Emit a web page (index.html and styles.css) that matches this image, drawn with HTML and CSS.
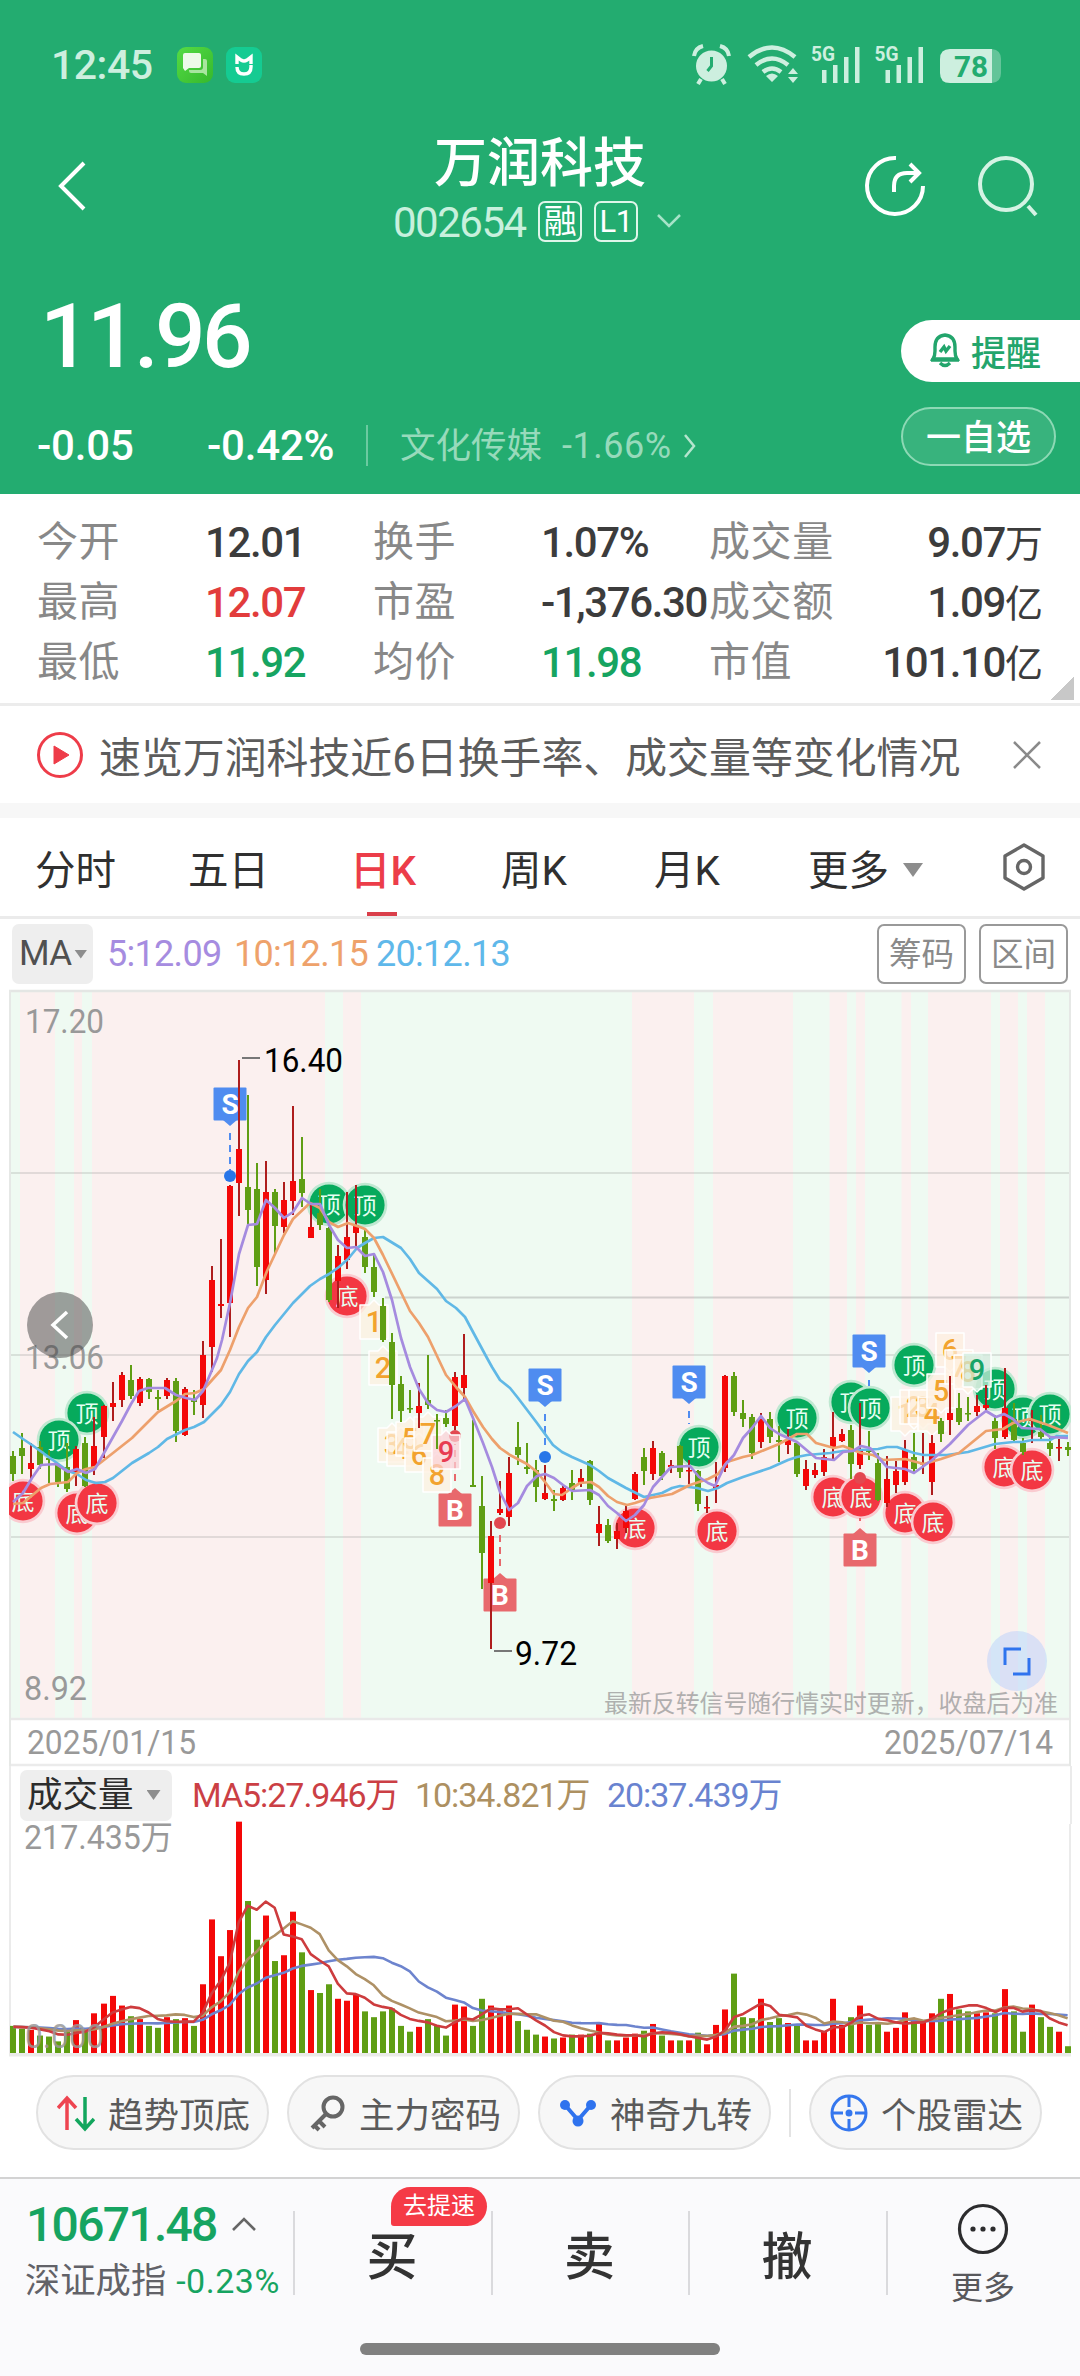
FILE: index.html
```html
<!DOCTYPE html>
<html lang="zh-CN">
<head>
<meta charset="utf-8">
<title>万润科技 002654</title>
<link rel="stylesheet" href="styles.css">
</head>
<body>
<header class="head">
  <div class="status">
    <span class="clock">12:45</span>
    <svg class="app" width="36" height="36" viewBox="0 0 36 36"><defs><linearGradient id="ga" x2="1" y2="1"><stop stop-color="#55db45"/><stop offset="1" stop-color="#36b82c"/></linearGradient></defs><rect width="36" height="36" rx="9" fill="url(#ga)"/><path d="M8 6h14a2 2 0 0 1 2 2v11a2 2 0 0 1-2 2H12l-4 3-2-3V8a2 2 0 0 1 2-2z" fill="#edfae9"/><path d="M26 12h2a2 2 0 0 1 2 2v15l-4-3H14a2 2 0 0 1-2-2v-1h11a3 3 0 0 0 3-3z" fill="#a9e59f"/></svg>
    <svg class="app" width="36" height="36" viewBox="0 0 36 36"><rect width="36" height="36" rx="9" fill="#15cb92"/><path d="M11 17V10l4 3q3 2 6 0l4-3v7M11 20q0 7 7 7t7-7v-2" fill="none" stroke="#fff" stroke-width="3.4"/></svg>
    <span class="grow"></span>
    <svg class="sys" width="310" height="44" viewBox="690 42 310 44" fill="#cdefdf">
      <circle cx="710.500" cy="65" r="15.500"/><path d="M693 55q1-8 9-10M728 55q-1-8-9-10M700 78l-3 5M721 78l3 5" fill="none" stroke="#cdefdf" stroke-width="4"/><path d="M710.500 56v9l-4 5" fill="none" stroke="#23ac70" stroke-width="3"/>
      <g fill="none" stroke="#cdefdf" stroke-width="4.500"><path d="M748 56q23-19 46 0M755 64q16-13 32 0M762 71q9-7 18 0"/></g><path d="M771 81l-6-6q6-5 12 0zM787 73l5-6 5 6zM787 76h10l-5 6z"/>
      <g id="bars"><rect x="821" y="69" width="4.500" height="13"/><rect x="832" y="64" width="4.500" height="18"/><rect x="843" y="56" width="4.500" height="26"/><rect x="854" y="46" width="4.500" height="36"/><text x="810" y="60" font-size="20" font-weight="700" textLength="24" lengthAdjust="spacingAndGlyphs">5G</text></g>
      <use href="#bars" x="63.500"/>
      <path d="M990 48h3q9 1 9 10v14q0 9-9 10h-3z" fill="#63c499" transform="translate(-2)"/><path d="M949 48h42v34h-42q-10 0-10-10V58q0-10 10-10z"/><text x="953" y="76" font-size="30" font-weight="700" fill="#23ac70" textLength="34" lengthAdjust="spacingAndGlyphs">78</text>
    </svg>
  </div>
  <div class="nav">
    <svg class="back" width="32" height="52" viewBox="0 0 32 52"><path d="M28 3L5 26l23 23"/></svg>
    <div class="name">
      <h1>万润科技</h1>
      <div class="code"><span class="num">002654</span><i class="tag">融</i><i class="tag">L1</i><svg width="26" height="16" viewBox="0 0 26 16"><path d="M2 2l11 11L24 2"/></svg></div>
    </div>
    <div class="tools">
      <svg width="62" height="62" viewBox="0 0 62 62"><path d="M32 3A28 28 0 1 0 59 31"/><path d="M30 37V31q0-13 13-13h12M46 9l9 9-9 9"/></svg>
      <svg width="62" height="62" viewBox="0 0 62 62"><circle cx="29" cy="29" r="26"/><path d="M51 51l8 9"/></svg>
    </div>
  </div>
  <div class="quote">
    <div class="price">11.96</div>
    <div class="side">
      <div class="remind"><svg width="32" height="36" viewBox="0 0 32 36"><path d="M4 27q2-3 2-8v-4Q6 4 16 3q10 1 10 12v4q0 5 2 8zM2 28h28M11 31q5 5 10 0M11 20l4-5 2 4 4-5"/></svg>提醒</div>
      <div class="watch">一自选</div>
    </div>
    <div class="change"><span>-0.05</span><span>-0.42%</span><i></i><b>文化传媒</b><em>-1.66%</em><svg width="14" height="26" viewBox="0 0 14 26"><path d="M2 2l9 11-9 11"/></svg></div>
  </div>
</header>

<section class="stats">
  <label>今开</label><span>12.01</span><label>换手</label><span>1.07%</span><label>成交量</label><span class="r">9.07<i>万</i></span>
  <label>最高</label><span class="up">12.07</span><label>市盈</label><span>-1,376.30</span><label>成交额</label><span class="r">1.09<i>亿</i></span>
  <label>最低</label><span class="dn">11.92</span><label>均价</label><span class="dn">11.98</span><label>市值</label><span class="r">101.10<i>亿</i></span>
</section>

<section class="tip">
  <svg width="48" height="48" viewBox="0 0 48 48"><circle cx="24" cy="24" r="21.500" fill="none" stroke="#ee3c49" stroke-width="3"/><path d="M18 15l15 9-15 9z" fill="#ee3c49" stroke="#ee3c49" stroke-linejoin="round"/></svg>
  <span>速览万润科技近6日换手率、成交量等变化情况</span>
  <svg width="30" height="30" viewBox="0 0 30 30"><path d="M2 2l26 26M28 2L2 28" stroke="#8a8a8a" stroke-width="2.500"/></svg>
</section>

<nav class="tabs">
  <span>分时</span><span>五日</span><span class="on">日K</span><span>周K</span><span>月K</span><span>更多</span><i class="caret"></i>
  <svg width="44" height="48" viewBox="0 0 44 48"><path d="M22 2l19 11v22L22 46 3 35V13z" stroke-linejoin="round"/><circle cx="22" cy="24" r="6.500"/></svg>
</nav>

<div class="ma">
  <span class="pick">MA<i class="caret"></i></span>
  <span class="m5">5:12.09</span><span class="m10">10:12.15</span><span class="m20">20:12.13</span>
  <span class="grow"></span><span class="box">筹码</span><span class="box">区间</span>
</div>
<svg id="kline" class="chart" width="1080" height="778" viewBox="0 8 1080 778"></svg>
<div class="vol">
  <span class="pick">成交量<i class="caret"></i></span>
  <span class="v5">MA5:27.946万</span><span class="v10">10:34.821万</span><span class="v20">20:37.439万</span>
</div>
<svg id="volume" class="chart" width="1080" height="233" viewBox="0 0 1080 233"></svg>

<div class="chips">
  <span><svg width="38" height="38" viewBox="0 0 38 38" fill="none" stroke-width="3.500"><path d="M10 36V5M1 14l9-10 9 10" stroke="#ee4450"/><path d="M28 3v31M19 25l9 10 9-10" stroke="#12a65d"/></svg>趋势顶底</span>
  <span><svg width="38" height="38" viewBox="0 0 38 38" fill="none" stroke="#666" stroke-width="4"><circle cx="25" cy="13" r="9.500"/><path d="M18 20L4 34M11 27l6 6M6 31l5 5"/></svg>主力密码</span>
  <span><svg width="38" height="38" viewBox="0 0 38 38" fill="#2f73ee"><path d="M6 11l13 15L32 11" fill="none" stroke="#2f73ee" stroke-width="4"/><circle cx="6" cy="11" r="5"/><circle cx="32" cy="11" r="5"/><circle cx="19" cy="27" r="5.500"/></svg>神奇九转</span>
  <i></i>
  <span><svg width="38" height="38" viewBox="0 0 38 38" fill="none" stroke="#3577ee" stroke-width="3"><circle cx="19" cy="19" r="17"/><path d="M19 2v11M19 25v11M2 19h11M25 19h11"/><circle cx="19" cy="19" r="2" fill="#3577ee"/></svg>个股雷达</span>
</div>

<footer class="foot">
  <div class="index"><div class="pt">10671.48<svg width="26" height="16" viewBox="0 0 26 16"><path d="M2 14L13 3l11 11"/></svg></div><div class="nm">深证成指<b>-0.23%</b></div></div>
  <div class="act">买<span class="badge">去提速</span></div>
  <div class="act">卖</div>
  <div class="act">撤</div>
  <div class="more"><svg width="52" height="52" viewBox="0 0 52 52"><circle cx="26" cy="26" r="23.500" fill="none" stroke="#2c2c2e" stroke-width="3.200"/><g fill="#2c2c2e"><circle cx="16" cy="26" r="2.600"/><circle cx="26" cy="26" r="2.600"/><circle cx="36" cy="26" r="2.600"/></g></svg>更多</div>
  <div class="home"></div>
</footer>
<script src="chart.js"></script>
</body>
</html>
```
FILE: styles.css
```css
* { box-sizing: border-box; }
body { margin: 0; width: 1080px; height: 2376px; overflow: hidden; background: #fff; color: #333;
  font-family: Roboto, "Noto Sans CJK SC", sans-serif; }
i, em { font-style: normal; }
svg { display: block; flex: none; }
.grow { flex: 1; }

.head { height: 494px; background: #23ac70; color: #fff; }
.status { display: flex; align-items: center; height: 130px; padding: 0 79px 0 51px; color: #cdefdf; }
.clock { width: 126px; font-size: 41px; font-weight: 500; letter-spacing: -.5px; line-height: 46px; }
.app { margin-right: 13px; }
.nav { display: grid; grid-template-columns: 300px 480px 300px; height: 130px; }
.nav svg { fill: none; stroke: #fff; stroke-width: 4; }
.back { margin: 30px 0 0 56px; }
.name { text-align: center; }
h1 { margin: 0; padding-top: 1px; font-size: 53px; font-weight: 500; line-height: 66px; }
.code { display: flex; align-items: center; height: 48px; padding-left: 93px; }
.code .num { width: 145px; padding-top: 3px; text-align: left; font-size: 42px; letter-spacing: -1.5px; color: #c8f0dd; }
.tag { width: 44px; height: 41px; margin-right: 12px; border: 2.5px solid #dff6ea; border-radius: 7px; font-size: 33px; line-height: 37px; letter-spacing: -.5px; }
.tag + .tag { font-size: 31px; }
.code svg { margin-left: 6px; stroke: #a6e3c8; stroke-width: 2.5; }
.tools { display: flex; gap: 51px; padding: 25px 0 0 84px; }
.tools svg + svg { stroke: #d5f3e4; }
.quote { display: grid; grid-template-columns: 901px 179px; grid-template-rows: 146px 76px; }
.price { padding-left: 40px; font-size: 89px; line-height: 153px; letter-spacing: -3.6px; font-weight: 500; }
.side { grid-row: 1 / 3; grid-column: 2; padding-top: 60px; }
.remind { display: flex; align-items: center; gap: 10px; height: 62px; padding: 0 0 2px 28px; border-radius: 31px 0 0 31px; background: #fff; color: #23a56c; font-size: 35px; font-weight: 500; }
.remind svg { fill: none; stroke: #23a56c; stroke-width: 3.4; }
.watch { width: 155px; height: 59px; margin-top: 25px; border: 2px solid #8dd9b5; border-radius: 30px; background: #38b37d; font-size: 35px; font-weight: 500; line-height: 59px; text-align: center; }
.change { display: flex; align-items: center; grid-row: 2; grid-column: 1; padding: 3px 0 0 37px; font-size: 42px; line-height: 76px; }
.change span { width: 170px; font-weight: 500; letter-spacing: -.2px; }
.change i { width: 2px; height: 41px; margin: 0 32px 0 -11px; background: #6bcaa0; }
.change b { width: 162px; color: #97dabb; font-size: 35.5px; font-weight: 400; }
.change em { width: 119px; color: #97dabb; font-size: 36px; letter-spacing: .5px; }
.change svg { margin-left: 2px; fill: none; stroke: #b4e5ce; stroke-width: 2.5; }

.stats { display: grid; grid-template-columns: 168px 168px 168px 168px 150px 1fr; grid-template-rows: repeat(3, 60px); height: 212px; padding: 18px 37px 0; border-bottom: 3px solid #ececec; font-size: 42px; line-height: 61px;
  background: linear-gradient(135deg, transparent 50%, #c8c8c8 51%) 1050px 182px / 24px 24px no-repeat; }
.stats label { color: #888; font-size: 41px; letter-spacing: .6px; }
.stats span { white-space: nowrap; letter-spacing: -1.4px; font-weight: 500; color: #3c3c3c; }
.stats .r { text-align: right; }
.stats i { font-size: 38px; font-weight: 400; letter-spacing: 0; }
.stats .up { color: #e23c3c; }
.stats .dn { color: #16a461; }

.tip { display: flex; align-items: center; height: 112px; padding: 0 38px 0 36px; border-bottom: 15px solid #f7f7f7; color: #5c5c5c; font-size: 41.9px; }
.tip span { flex: 1; margin-left: 15px; white-space: nowrap; }

.tabs { display: grid; grid-template-columns: 153px 162px 151px 153px 154px 95px 99px 1fr; align-items: center; height: 101px; padding-left: 35px; border-bottom: 3px solid #ebebeb; font-size: 40.5px; line-height: 98px; color: #303030; }
.tabs span { height: 98px; line-height: 107px; }
.tabs .on { color: #ec3d49; font-weight: 500; background: linear-gradient(#da3f4a, #da3f4a) 17px 94px / 30px 4px no-repeat; }
.tabs svg { fill: none; stroke: #666; stroke-width: 3.4; }
.caret { display: inline-block; width: 20px; height: 14px; background: #8d8d8d; clip-path: polygon(0 0, 100% 0, 50% 100%); }
.tabs .caret { margin-top: 6px; }

.ma { display: flex; align-items: center; height: 69px; padding: 1px 12px 0; font-size: 36px; letter-spacing: -.7px; line-height: 62px; }
.pick { display: flex; align-items: center; background: #eee; border-radius: 7px; }
.ma .pick { width: 81px; height: 60px; padding-left: 7px; gap: 3px; margin-right: 14px; color: #505050; font-size: 35px; }
.ma .caret { width: 13px; height: 9px; }
.ma .m5 { width: 127px; color: #a68ce0; }
.ma .m10 { width: 142px; color: #eea26b; }
.m20 { color: #5fb8ea; }
.box { width: 89px; height: 60px; margin-left: 13px; border: 2.5px solid #999; border-radius: 7px; text-align: center; font-size: 32.5px; line-height: 58px; color: #8a8a8a; letter-spacing: 0; }
.chart { overflow: visible; }
.chart text { font-family: Roboto, "Noto Sans CJK SC", sans-serif; }

.vol { display: flex; align-items: center; height: 58px; margin: 0 8px 0 9px; padding-left: 9px; border: solid #ebebeb; border-width: 0 2px; font-size: 34px; line-height: 56px; }
.vol .pick { width: 152px; height: 51px; margin-right: 20px; padding-left: 7px; gap: 13px; font-size: 35.5px; color: #2c2c2c; }
.vol .caret { width: 14px; height: 10px; }
.vol span { white-space: nowrap; letter-spacing: -1.05px; }
.vol .v5 { width: 223px; color: #cb3f45; }
.vol .v10 { width: 192px; color: #ad9061; }
.v20 { color: #6983d0; }
.vol .pick { letter-spacing: 0; }

.chips { display: flex; align-items: center; gap: 18px; height: 120px; padding: 0 36px 9px; }
.chips span { display: flex; align-items: center; gap: 13px; width: 233px; height: 75px; padding-left: 19px; border: 2px solid #e2e2e2; border-radius: 38px; background: #f7f7f7; color: #5a5a5a; font-size: 35.5px; white-space: nowrap; }
.chips i { width: 2px; height: 48px; background: #e3e3e3; }

.foot { display: grid; grid-template-columns: 293px 198px 197px 198px 194px; grid-template-rows: 164px 33px; height: 199px; border-top: 2px solid #d3d3d3; background: #fafafc; }
.index { padding: 15px 0 0 26px; white-space: nowrap; }
.pt { display: flex; align-items: center; height: 60px; font-size: 48px; font-weight: 500; letter-spacing: -1.7px; color: #16a461; }
.pt svg { margin: 0 0 0 14px; fill: none; stroke: #666; stroke-width: 2.6; }
.nm { height: 56px; margin-left: -1px; font-size: 35.3px; line-height: 54px; color: #626268; }
.nm b { margin-left: 10px; color: #16a461; font-size: 34px; font-weight: 400; letter-spacing: .5px; }
.act { position: relative; font-size: 51px; font-weight: 500; line-height: 158px; text-align: center; }
.act, .more { background: linear-gradient(#dadadd, #dadadd) 0 32px / 2px 84px no-repeat; }
.badge { position: absolute; left: 98px; top: 8px; width: 96px; height: 39px; border-radius: 20px 20px 20px 3px; background: #f53a46; color: #fff; font-size: 24px; line-height: 38px; font-weight: 400; }
.more { display: flex; flex-direction: column; align-items: center; padding-top: 24px; font-size: 32px; line-height: 66px; color: #58585c; }
.home { grid-column: 1 / 6; justify-self: center; width: 360px; height: 12px; border-radius: 6px; background: #808080; }
```
FILE: chart.js
```js
const RED = '#f40808', GREEN = '#5f9e14', STEP = 9.01, X0 = 13.4;
const xAt = i => X0 + i * STEP;

// colour, high, body top, body bottom, low, volume
const days = `g 471 476 494 501 28|g 453 468 476 494 25|r 463 483 489 500 24|g 461 467 485 489 18|g 470 478 480 503 17|g 483 485 502 507 12|g 463 487 509 512 23|r 466 469 493 506 34|g 457 463 506 507 24|r 437 466 488 495 41|r 425 426 457 478 51|r 402 423 427 441 59|r 392 395 420 427 49|g 385 400 416 419 38|r 397 399 423 426 35|g 398 399 412 419 28|g 410 417 419 430 26|r 398 400 416 419 37|g 398 401 451 462 35|r 407 409 455 456 36|g 410 419 422 435 28|r 361 375 425 438 71|r 286 300 367 392 138|r 259 324 326 338 100|r 205 206 323 357 127|r 80 169 203 236 239|g 115 207 230 244 157|g 183 209 287 306 117|r 181 212 300 314 142|g 209 212 246 273 95|r 202 220 247 253 101|r 126 201 221 235 146|g 157 199 213 227 104|r 222 247 258 258 65|g 209 233 245 250 62|g 247 248 320 322 71|r 265 276 301 328 56|r 212 257 280 289 54|r 205 245 253 267 61|g 248 257 287 293 43|g 275 287 312 317 37|g 318 326 360 362 43|g 353 362 405 439 46|g 396 404 431 442 28|g 410 428 429 433 22|r 403 426 433 448 27|g 375 420 425 429 35|g 434 440 441 469 29|g 430 438 444 447 18|r 392 397 446 450 50|r 354 395 408 420 48|g 440 505 507 507 28|g 496 526 573 609 56|r 541 556 603 669 49|r 501 529 533 535 44|r 477 493 537 546 49|g 442 467 475 485 33|g 463 487 489 494 24|g 480 490 507 522 19|r 485 513 519 520 17|g 510 519 521 531 15|r 506 508 520 521 16|g 490 503 510 520 19|r 489 498 503 507 19|g 480 481 520 525 20|r 526 544 553 566 30|g 539 545 561 563 13|r 543 551 559 569 13|r 526 531 548 553 16|r 492 494 519 520 20|g 468 477 491 505 23|r 461 468 494 500 30|g 471 473 496 500 18|r 480 485 487 493 13|g 465 466 492 498 13|r 480 490 491 504 13|g 490 491 524 531 21|r 516 527 528 533 9|r 482 505 509 523 29|r 395 396 488 492 45|g 392 396 432 436 82|g 420 433 439 447 37|g 434 437 473 479 36|r 433 439 462 468 56|g 432 439 457 463 32|g 446 460 462 482 36|r 449 460 465 474 31|g 462 463 494 497 29|r 480 489 506 510 13|r 483 490 495 498 13|r 469 477 492 496 22|r 432 457 467 480 56|r 449 454 461 462 29|g 445 450 484 499 37|r 423 470 485 489 49|g 451 469 472 480 29|g 473 483 520 521 32|r 476 499 523 527 22|r 481 491 505 513 26|r 460 470 502 505 42|g 453 477 489 493 35|r 453 483 484 494 33|r 455 463 502 515 41|g 438 441 454 462 56|r 396 433 440 455 61|g 413 428 442 445 45|g 417 433 434 441 43|r 415 426 432 436 41|r 405 425 428 430 42|g 435 441 458 469 41|r 388 428 457 459 66|g 423 439 460 463 43|g 458 463 472 475 22|r 430 439 441 463 50|g 435 452 457 460 37|g 458 463 469 476 27|r 459 467 468 481 22|g 462 467 470 476 7`
  .split('|').map(s => { const [c, ...n] = s.split(' '); return [c, ...n.map(Number)]; });

const falling = [[20,55],[74,82],[92,325],[343,361],[632,694],[713,793],[829.5,847],[856,865],[901.5,911],[928,991],[1000,1018],[1027,1045]];
const ma5 = '13,522 23,513 32,498 41,485 56,484 68,492 77,489 86,493 95,489 104,473 113,457 122,441 131,424 139,411 148,408 165,408 176,415 186,418 195,420 203,411 212,390 217,378 222,360 230,323 239,274 248,245 257,244 266,220 275,228 284,238 293,232 302,218 311,224 320,224 329,245 338,260 347,268 356,267 365,276 374,274 383,292 392,320 401,358 410,387 419,409 428,423 437,430 446,432 456,426 465,419 473,438 483,463 492,487 500,512 509,530 518,523 527,506 537,496 545,494 554,498 563,505 572,511 590,510 599,515 608,526 617,533 626,541 635,535 644,525 653,507 671,487 690,486 699,497 708,503 715,506 725,485 734,475 743,458 752,448 761,436 770,448 779,454 797,462 816,478 834,480 843,472 853,471 861,466 870,468 887,487 905,489 914,493 932,480 950,464 968,445 986,431 996,437 1004,434 1013,439 1022,448 1040,449 1050,457 1068,458';
const ma10 = '13,524 23,523 41,508 50,504 68,502 77,493 86,489 95,487 113,473 132,458 158,432 176,421 185,414 195,413 204,409 221,390 230,370 239,347 248,328 257,317 267,291 284,255 293,239 310,223 320,228 329,242 338,247 348,243 360,247 365,249 374,258 383,275 410,331 419,343 428,357 437,376 446,395 456,407 465,417 473,431 483,447 492,459 500,468 510,475 527,484 537,492 545,502 554,514 562,515 572,508 580,503 591,502 599,507 608,516 617,522 627,525 635,523 650,518 672,514 690,505 708,499 718,494 727,482 743,477 752,475 779,464 797,454 807,454 816,463 834,468 843,466 861,473 873,475 883,480 905,479 924,484 941,479 959,473 986,451 1003,449 1013,443 1030,439 1048,445 1068,453';
const ma20 = '13,452 23,459 32,465 50,478 68,491 77,494 86,500 96,503 105,502 113,498 132,483 149,473 158,467 167,459 185,450 194,447 204,442 221,425 230,412 239,394 248,381 257,372 266,357 275,345 293,323 310,306 320,299 329,294 339,287 348,279 357,268 365,263 374,258 383,257 401,268 410,279 419,293 428,301 437,309 446,321 456,328 465,337 473,352 487,378 492,387 500,400 510,408 518,418 537,443 553,465 562,472 572,477 590,485 599,491 608,498 626,508 644,517 662,513 672,508 680,506 697,508 708,511 718,508 727,503 743,497 752,494 770,488 788,480 797,477 807,475 830,473 843,471 878,469 887,467 897,467 914,473 924,475 947,475 968,472 995,464 1013,462 1022,462 1032,460 1050,460 1057,456 1068,456';
const tops = [[87,433],[59,460],[329,224],[365,225],[699,467],[797,438],[851,422],[870,428],[914,385],[995,409],[1023,437],[1050,434]];
const bottoms = [[23,521],[77,533],[97,523],[347,316],[635,548],[717,551],[833,517],[861,517],[905,533],[933,542],[1004,487],[1032,490]];
// x, y, number, arrow direction, kind
const counts = [[374,342,1,-1],[383,388,2,-1],[392,465,3,-1],[401,469,4,-1],[410,459,5,-1],[419,475,6,-1],[428,454,7,-1],[437,495,8,-1],[446,472,9,-1,'p'],
  [905,434,1,1],[914,427,2,1],[923,427,3,1],[932,434,4,1],[941,411,5,1],[950,370,6,1],[959,387,7,1],[968,392,8,1],[977,390,9,1,'g']];

const rect = (x, y, w, h, f, extra = '') => `<rect x="${x}" y="${y}" width="${w}" height="${h}" fill="${f}" ${extra}/>`;
const line = (x1, y1, x2, y2, c, w, extra = '') => `<path d="M${x1} ${y1}L${x2} ${y2}" stroke="${c}" stroke-width="${w}" ${extra}/>`;
const poly = (p, c, w) => `<polyline points="${p}" fill="none" stroke="${c}" stroke-width="${w}" stroke-linejoin="round"/>`;
const text = (x, y, s, size, c, len, extra = '') => `<text x="${x}" y="${y}" font-size="${size}" fill="${c}" ${len ? `textLength="${len}" lengthAdjust="spacingAndGlyphs"` : ''} ${extra}>${s}</text>`;
const mid = 'text-anchor="middle"';

function seal([x, y], label, fill, ring) {
  return `<circle cx="${x}" cy="${y}" r="22.3" fill="${ring}"/><circle cx="${x}" cy="${y}" r="19.6" fill="${fill}"/>` + text(x, y + 8.5, label, 23, '#e6fff2', 0, mid);
}
function flag(x, y, label, dotY, end) {
  const sell = label === 'S', c = sell ? '#4f8cf0' : '#e8686c', d = sell ? 1 : -1, pin = sell ? '#2876e8' : '#e24850';
  let s = line(x, y + d * 29, x, end, c, 2, 'stroke-dasharray="7 5"');
  if (dotY) s += `<circle cx="${x}" cy="${dotY}" r="6" fill="${pin}"/>`;
  return s + rect(x - 16.5, y - 16.5, 33, 33, c, 'rx="1"') + `<path d="M${x - 7} ${y + d * 16}h14l-7 ${d * 6}z" fill="${c}"/>` + text(x, y + 10, label, 28, '#fff', 0, mid + ' font-weight="700"');
}
function count([x, y, n, d, k]) {
  const f = k === 'p' ? '#fbd0d6' : k === 'g' ? '#cdecdc' : '#fdf0df', c = k === 'p' ? '#e83c52' : k === 'g' ? '#18a468' : '#f2a32e';
  const t = y - 17, b = y + 17, l = x - 14, r = x + 14;
  const shape = d < 0 ? `M${l} ${t}H${x - 5}L${x} ${t - 5}L${x + 5} ${t}H${r}V${b}H${l}z` : `M${l} ${t}H${r}V${b}H${x + 5}L${x} ${b + 5}L${x - 5} ${b}H${l}z`;
  return `<path d="${shape}" fill="${f}" fill-opacity=".72" stroke="#fff" stroke-width="1.5" stroke-linejoin="round"/>` + text(x, y + 10, n, 29, c, 0, mid + ' font-weight="500"');
}

let k = rect(10, 11, 1060, 727, '#effaf2');
falling.forEach(([a, b]) => k += rect(a, 11, b - a, 727, '#fbf0ef'));
[193, 375, 557].forEach(y => k += line(10, y, 1070, y, '#8a8a8a', 1.8, 'opacity=".22"'));
k += line(385, 317.5, 1071, 317.5, '#8a8a8a', 2, 'opacity=".34"');
k += line(9, 11, 1071, 11, '#e4e6e4', 2.5) + line(9, 739, 1071, 739, '#e9e9e9', 2.5) + line(9, 785, 1071, 785, '#ebebeb', 2.5);
k += line(10, 10, 10, 786, '#e6e8e6', 2) + line(1070, 10, 1070, 786, '#e6e8e6', 2);
k += `<clipPath id="pane"><rect x="9" y="10" width="1062" height="730"/></clipPath><g clip-path="url(#pane)">`;
tops.forEach(p => k += seal(p, '顶', '#06aa5c', '#bfe8d1'));
bottoms.forEach(p => k += seal(p, '底', '#f33743', '#facbd0'));
k += flag(230, 124, 'S', 196, 190) + flag(545, 405, 'S', 477, 470) + flag(689, 402, 'S', 0, 444) + flag(869, 371, 'S', 0, 406);
k += flag(455, 530, 'B', 456, 464) + flag(500, 615, 'B', 543, 552) + flag(860, 570, 'B', 498, 538);
counts.forEach(c => k += count(c));
days.forEach(([c, hi, t, b, lo], i) => {
  const x = Math.round(xAt(i)), f = c === 'r' ? RED : GREEN;
  k += rect(x - 1, hi, 2, Math.max(1, lo - hi), c === 'r' ? '#ae1d1d' : GREEN) + rect(x - 3, t, 6, Math.max(1.5, b - t), f);
});
k += '</g>' + poly(ma20, '#60b8e6', 2.7) + poly(ma10, '#eda06c', 2.7) + poly(ma5, '#a58bdf', 2.7);
k += line(242, 78, 260, 78, '#777', 2) + text(264, 92, '16.40', 33, '#000', 79);
k += line(494, 671, 512, 671, '#777', 2) + text(515, 685, '9.72', 33, '#000', 62);
k += text(25, 53, '17.20', 33, '#999', 79) + text(25, 389, '13.06', 33, '#999', 79) + text(24, 720, '8.92', 33, '#999', 63);
k += '<circle cx="60" cy="345" r="33" fill="#444" opacity=".5"/><path d="M67 332L53 345l14 13" fill="none" stroke="#fff" stroke-width="3.5"/>';
k += '<circle cx="1017" cy="681" r="30" fill="#b9cffb" opacity=".5"/><path d="M1021 669h-16v16M1029 678v16h-16" fill="none" stroke="#2f73ee" stroke-width="3"/>';
k += text(604, 732, '最新反转信号随行情实时更新，收盘后为准', 24, '#999', 454, 'opacity=".75"');
k += text(27, 774, '2025/01/15', 33, '#999', 169) + text(884, 774, '2025/07/14', 33, '#999', 169);
document.getElementById('kline').innerHTML = k;

const BASE = 229, vol = days.map(d => d[5] * .968);
const avg = n => vol.map((_, i) => {
  let s = 0;
  for (let j = i - n + 1; j <= i; j++) s += j < 0 ? 26 : vol[j];
  return `${xAt(i).toFixed(1)},${(BASE - s / n).toFixed(1)}`;
}).join(' ');
let v = line(10, 0, 10, 232, '#ebebeb', 2) + line(1070, 0, 1070, 232, '#ebebeb', 2) + rect(9, 229, 1062, 3.5, '#ebebe9');
days.forEach((d, i) => v += rect(Math.round(xAt(i)) - 3, BASE - vol[i], 6, vol[i], d[0] === 'r' ? RED : GREEN));
v += poly(avg(20), '#6d84ce', 2.6) + poly(avg(10), '#ae9166', 2.6) + poly(avg(5), '#cd3c3e', 2.6);
v += text(24, 25, '217.435万', 33, '#999', 149) + text(25, 224, '0.000', 33, '#999', 79, 'opacity=".85"');
document.getElementById('volume').innerHTML = v;
```
